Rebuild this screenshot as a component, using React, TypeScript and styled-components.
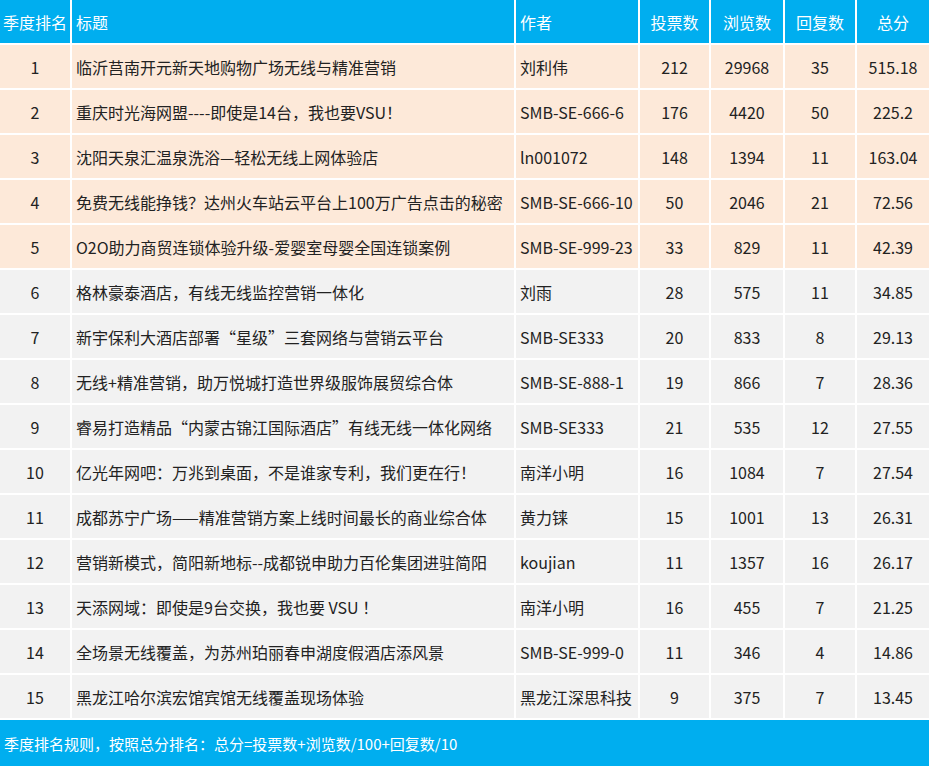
import styled, { createGlobalStyle } from "styled-components";

const GlobalStyle = createGlobalStyle`
  body {
    margin: 0;
    background: #ffffff;
    font-family: "Noto Sans CJK SC", "Liberation Sans", sans-serif;
  }
`;

const rows: [string, string, string, number, number, number, string][] = [
  ["1", "临沂莒南开元新天地购物广场无线与精准营销", "刘利伟", 212, 29968, 35, "515.18"],
  ["2", "重庆时光海网盟----即使是14台，我也要VSU！", "SMB-SE-666-6", 176, 4420, 50, "225.2"],
  ["3", "沈阳天泉汇温泉洗浴—轻松无线上网体验店", "ln001072", 148, 1394, 11, "163.04"],
  ["4", "免费无线能挣钱？达州火车站云平台上100万广告点击的秘密", "SMB-SE-666-10", 50, 2046, 21, "72.56"],
  ["5", "O2O助力商贸连锁体验升级-爱婴室母婴全国连锁案例", "SMB-SE-999-23", 33, 829, 11, "42.39"],
  ["6", "格林豪泰酒店，有线无线监控营销一体化", "刘雨", 28, 575, 11, "34.85"],
  ["7", "新宇保利大酒店部署“星级”三套网络与营销云平台", "SMB-SE333", 20, 833, 8, "29.13"],
  ["8", "无线+精准营销，助万悦城打造世界级服饰展贸综合体", "SMB-SE-888-1", 19, 866, 7, "28.36"],
  ["9", "睿易打造精品“内蒙古锦江国际酒店”有线无线一体化网络", "SMB-SE333", 21, 535, 12, "27.55"],
  ["10", "亿光年网吧：万兆到桌面，不是谁家专利，我们更在行！", "南洋小明", 16, 1084, 7, "27.54"],
  ["11", "成都苏宁广场——精准营销方案上线时间最长的商业综合体", "黄力铼", 15, 1001, 13, "26.31"],
  ["12", "营销新模式，简阳新地标--成都锐申助力百伦集团进驻简阳", "koujian", 11, 1357, 16, "26.17"],
  ["13", "天添网域：即使是9台交换，我也要 VSU ！", "南洋小明", 16, 455, 7, "21.25"],
  ["14", "全场景无线覆盖，为苏州珀丽春申湖度假酒店添风景", "SMB-SE-999-0", 11, 346, 4, "14.86"],
  ["15", "黑龙江哈尔滨宏馆宾馆无线覆盖现场体验", "黑龙江深思科技", 9, 375, 7, "13.45"],
];

const Table = styled.div`
  width: 929px;
  display: grid;
  grid-template-columns: 72px 444px 124px 71px 74px 72px 72px;
  font-size: 16px;
`;

const Cell = styled.div<{ $bg: string; $left?: boolean; $head?: boolean }>`
  height: 45px;
  box-sizing: border-box;
  background: ${(p) => p.$bg};
  color: ${(p) => (p.$head ? "#ffffff" : "#222222")};
  border-right: 2px solid #ffffff;
  border-bottom: 2px solid #ffffff;
  display: flex;
  align-items: center;
  justify-content: ${(p) => (p.$left ? "flex-start" : "center")};
  padding-left: ${(p) => (p.$left ? "4px" : "0")};
  white-space: nowrap;
  overflow: hidden;
  &:nth-child(7n) {
    border-right: none;
  }
`;

const Footer = styled.div`
  width: 929px;
  height: 46px;
  background: #00aeef;
  color: #ffffff;
  font-size: 15px;
  display: flex;
  align-items: center;
  padding-left: 4px;
  box-sizing: border-box;
`;

const HEAD = "#00aeef";
const heads = ["季度排名", "标题", "作者", "投票数", "浏览数", "回复数", "总分"];

export default function App() {
  return (
    <>
      <GlobalStyle />
      <Table>
        {heads.map((h, i) => (
          <Cell key={h} $bg={HEAD} $head $left={i === 1 || i === 2}>
            {h}
          </Cell>
        ))}
        {rows.map((r, ri) => {
          const bg = ri < 5 ? "#fde9d9" : "#f2f2f2";
          return r.map((v, i) => (
            <Cell key={`${ri}-${i}`} $bg={bg} $left={i === 1 || i === 2}>
              {v}
            </Cell>
          ));
        })}
      </Table>
      <Footer>季度排名规则，按照总分排名：总分=投票数+浏览数/100+回复数/10</Footer>
    </>
  );
}
